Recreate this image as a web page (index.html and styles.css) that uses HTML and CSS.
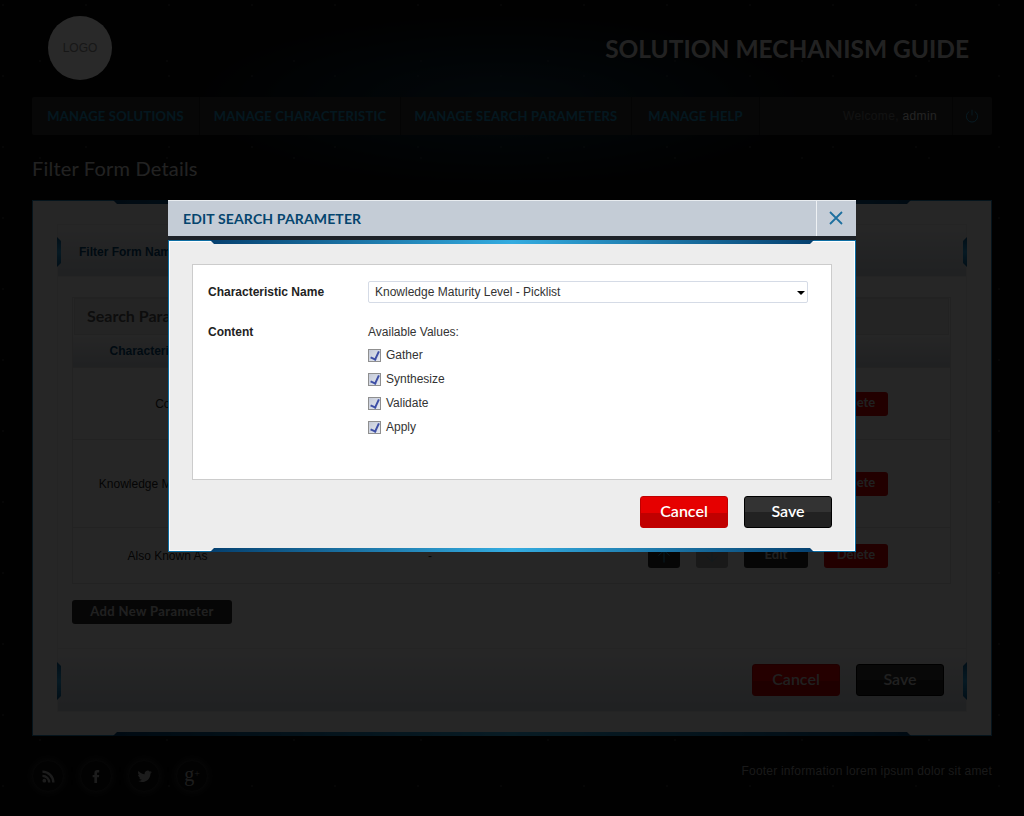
FILE: index.html
```html
<!DOCTYPE html>
<html lang="en">
<head>
    <meta charset="UTF-8">
    <meta name="viewport" content="width=device-width, initial-scale=1.0">
    <title>Filter Form Details</title>
    <link rel="stylesheet" href="styles.css">
</head>
<body>
    <div class="page">
        <header class="top">
            <div class="logo">LOGO</div>
            <div class="site-name">SOLUTION MECHANISM GUIDE</div>
        </header>

        <nav class="nav">
            <a class="nav-link link-1">MANAGE SOLUTIONS</a>
            <a class="nav-link link-2">MANAGE CHARACTERISTIC</a>
            <a class="nav-link link-3">MANAGE SEARCH PARAMETERS</a>
            <a class="nav-link link-4">MANAGE HELP</a>
            <div class="welcome">Welcome, <b>admin</b></div>
            <div class="power">
                <svg width="14" height="14" viewBox="0 0 14 14" fill="none" stroke="#2a9fd0" stroke-width="1">
                    <path d="M4.2 2.6a5.6 5.6 0 1 0 5.600 0"/>
                    <path d="M7 .8v5.600"/>
                </svg>
            </div>
        </nav>

        <h1 class="page-title">Filter Form Details</h1>

        <section class="panel">
            <div class="bar bar-top"></div>
            <div class="bar bar-bottom"></div>
            <div class="inner">
                <div class="form-head">
                    <div class="tab tab-left"></div>
                    <div class="tab tab-right"></div>
                    <span class="form-name">Filter Form Name</span>
                </div>

                <div class="params">
                    <div class="params-title">Search Parameters</div>
                    <div class="params-cols">
                        <div class="col-name">Characteristic Name</div>
                        <div class="col-value">Content</div>
                        <div class="col-actions">Actions</div>
                    </div>
                    <div class="row row-1">
                        <div class="col-name">Cost</div>
                        <div class="col-value">-</div>
                        <div class="col-actions">
                            <button class="mini up"><svg width="14" height="14" viewBox="0 0 14 14" fill="none" stroke="#2a9fd0" stroke-width="1"><path d="M7 13.500V1.500M1.500 6.500 7 1.500l5.500 5"/></svg></button>
                            <button class="mini down"><svg width="14" height="14" viewBox="0 0 14 14" fill="none" stroke="#2a9fd0" stroke-width="1"><path d="M7 .5v12M1.500 7.500 7 12.500l5.500-5"/></svg></button>
                            <button class="act edit">Edit</button>
                            <button class="act delete">Delete</button>
                        </div>
                    </div>
                    <div class="row row-2">
                        <div class="col-name">Knowledge Maturity Level</div>
                        <div class="col-value">-</div>
                        <div class="col-actions">
                            <button class="mini up"><svg width="14" height="14" viewBox="0 0 14 14" fill="none" stroke="#2a9fd0" stroke-width="1"><path d="M7 13.500V1.500M1.500 6.500 7 1.500l5.500 5"/></svg></button>
                            <button class="mini down"><svg width="14" height="14" viewBox="0 0 14 14" fill="none" stroke="#2a9fd0" stroke-width="1"><path d="M7 .5v12M1.500 7.500 7 12.500l5.500-5"/></svg></button>
                            <button class="act edit">Edit</button>
                            <button class="act delete">Delete</button>
                        </div>
                    </div>
                    <div class="row row-3">
                        <div class="col-name">Also Known As</div>
                        <div class="col-value">-</div>
                        <div class="col-actions">
                            <button class="mini up"><svg width="14" height="14" viewBox="0 0 14 14" fill="none" stroke="#2a9fd0" stroke-width="1"><path d="M7 13.500V1.500M1.500 6.500 7 1.500l5.500 5"/></svg></button>
                            <button class="mini down"><svg width="14" height="14" viewBox="0 0 14 14" fill="none" stroke="#2a9fd0" stroke-width="1"><path d="M7 .5v12M1.500 7.500 7 12.500l5.500-5"/></svg></button>
                            <button class="act edit">Edit</button>
                            <button class="act delete">Delete</button>
                        </div>
                    </div>
                </div>

                <button class="add-btn">Add New Parameter</button>

                <div class="form-foot">
                    <div class="tab tab-left"></div>
                    <div class="tab tab-right"></div>
                    <button class="btn btn-red">Cancel</button>
                    <button class="btn btn-dark">Save</button>
                </div>
            </div>
        </section>

        <footer class="footer">
            <div class="social">
                <span class="circle">
                    <svg width="13" height="13" viewBox="0 0 14 14" fill="#b0b0b0"><circle cx="2.500" cy="11.500" r="2"/><path d="M.5 5v2.500A6 6 0 0 1 6.500 13.500H9A8.500 8.500 0 0 0 .5 5z"/><path d="M.5 .5V3A10.500 10.500 0 0 1 11 13.500h2.500A13 13 0 0 0 .5 .5z"/></svg>
                </span>
                <span class="circle">
                    <svg width="8" height="13" viewBox="0 0 10 16" fill="#b0b0b0"><path d="M3 16V9H.8V6H3V4c0-2.600 1.400-4 3.700-4H9v3H7.500C6.500 3 6.300 3.400 6.300 4.300V6H9l-.4 3H6.300v7z"/></svg>
                </span>
                <span class="circle">
                    <svg width="15" height="12" viewBox="0 0 18 14" fill="#b0b0b0"><path d="M18 2.200l-2 .6 1.500-1.900-2.100.9A3.500 3.500 0 0 0 9.300 4.900C6.300 4.800 3.600 3.300 1.800 1c-1 1.700-.4 3.700 1 4.800l-1.500-.4c0 1.700 1.200 3.100 2.800 3.500l-1.500.1c.5 1.400 1.700 2.400 3.300 2.400A7 7 0 0 1 .5 12.800c6.500 3.300 15.200.5 15.700-8.900z"/></svg>
                </span>
                <span class="circle circle-g">g<sup>+</sup></span>
            </div>
            <div class="foot-text">Footer information lorem ipsum dolor sit amet</div>
        </footer>
    </div>

    <div class="overlay"></div>

    <div class="modal">
        <div class="modal-head">
            <h2 class="modal-title">EDIT SEARCH PARAMETER</h2>
            <button class="modal-close">
                <svg width="14" height="14" viewBox="0 0 14 14" fill="none" stroke="#1d6f9f" stroke-width="1.800"><path d="M1 1l12 12M13 1L1 13"/></svg>
            </button>
        </div>
        <div class="modal-body">
            <div class="bar bar-top"></div>
            <div class="bar bar-bottom"></div>
            <div class="modal-box">
                <div class="field field-name">
                    <label class="field-label">Characteristic Name</label>
                    <div class="select-wrap">
                        <select class="field-select">
                            <option>Knowledge Maturity Level - Picklist</option>
                        </select>
                    </div>
                </div>
                <div class="field">
                    <label class="field-label">Content</label>
                    <div class="values">
                        <div class="values-title">Available Values:</div>
                        <label class="check"><input type="checkbox" checked>Gather</label>
                        <label class="check"><input type="checkbox" checked>Synthesize</label>
                        <label class="check"><input type="checkbox" checked>Validate</label>
                        <label class="check"><input type="checkbox" checked>Apply</label>
                    </div>
                </div>
            </div>
            <div class="modal-actions">
                <button class="btn btn-red">Cancel</button>
                <button class="btn btn-dark">Save</button>
            </div>
        </div>
    </div>
</body>
</html>
```

FILE: styles.css
```css
* {
    box-sizing: border-box;
}
html, body {
    height: 816px;
    overflow: hidden;
}
body {
    margin: 0;
    font-family: "Liberation Sans", Arial, sans-serif;
    font-size: 12px;
    color: #333;
    background-color: #080808;
    background-image:
        radial-gradient(ellipse 320px 90px at 500px 100px, #0f2f42, rgba(15, 47, 66, 0) 100%),
        radial-gradient(circle at 3px 5px, #2a2a2a .7px, transparent 1px),
        radial-gradient(circle at 40px 61px, #262626 .7px, transparent 1px);
    background-size: auto, 83px 71px, 127px 97px;
    background-repeat: no-repeat, repeat, repeat;
}
button {
    font-family: inherit;
    border: none;
    padding: 0;
}

/* header */
.page {
    width: 1024px;
    height: 816px;
    padding: 0 32px;
}
.top {
    height: 97px;
    display: flex;
    justify-content: space-between;
    align-items: flex-start;
    padding: 16px 23px 0 16px;
}
.logo {
    width: 64px;
    height: 64px;
    border-radius: 50%;
    background: #fbfbfb;
    color: #909090;
    font-size: 12px;
    line-height: 65px;
    text-align: center;
}
.site-name {
    margin-top: 18px;
    font-family: Lato, sans-serif;
    font-weight: 700;
    font-size: 24.5px;
    line-height: 30px;
    color: #d4d4d4;
}

/* nav */
.nav {
    height: 38px;
    display: flex;
    align-items: stretch;
    background: #2f2f2f;
    border-radius: 2px;
}
.nav-link {
    display: flex;
    align-items: center;
    justify-content: center;
    padding-bottom: 1px;
    font-family: Lato, sans-serif;
    font-weight: 700;
    font-size: 13px;
    letter-spacing: .2px;
    color: #1a90c0;
    border-right: 1px solid #1c1c1c;
}
.link-1 { width: 168px; }
.link-2 { width: 201px; }
.link-3 { width: 231px; }
.link-4 { width: 128px; }
.welcome {
    flex: 1;
    text-align: right;
    line-height: 38px;
    padding-right: 15px;
    color: #707070;
    letter-spacing: .35px;
}
.welcome b {
    font-weight: normal;
    color: #d8d8d8;
}
.power {
    width: 40px;
    padding-right: 2px;
    display: flex;
    align-items: center;
    justify-content: center;
    border-left: 1px solid #1c1c1c;
}

.page-title {
    margin: 0;
    height: 65px;
    padding-top: 20px;
    font-family: Lato, sans-serif;
    font-weight: 400;
    font-size: 20px;
    letter-spacing: .2px;
    line-height: 26px;
    color: #d4d4d4;
}

/* panel behind the dialog */
.panel {
    position: relative;
    width: 960px;
    height: 536px;
    padding: 23px 24px;
    background: #ededed;
    border: 1px solid #1f7fb0;
}
.bar {
    position: absolute;
    left: 41px;
    right: 41px;
    height: 4px;
    background: linear-gradient(90deg, #05406f, #34ace0 50%, #05406f);
}
.panel .bar {
    left: 80px;
    right: 80px;
}
.panel .bar-top {
    top: -1px;
    clip-path: polygon(0 0, 100% 0, calc(100% - 4px) 100%, 4px 100%);
}
.panel .bar-bottom {
    bottom: -1px;
    clip-path: polygon(4px 0, calc(100% - 4px) 0, 100% 100%, 0 100%);
}
.inner {
    height: 488px;
    border: 1px solid #ddd;
    display: flex;
    flex-direction: column;
}
.form-head {
    position: relative;
    height: 52px;
    flex-shrink: 0;
    padding: 1px 0 0 21px;
    line-height: 52px;
    background: linear-gradient(#ededed, #c4cad2);
    border-bottom: 1px solid #ddd;
}
.form-name {
    font-weight: bold;
    color: #05456e;
}
.tab {
    position: absolute;
    top: 12px;
    width: 4px;
    height: 30px;
    background: linear-gradient(#0a5a8e, #2a9fd8 50%, #0a5a8e);
}
.tab-left {
    left: -1px;
    clip-path: polygon(0 0, 100% 4px, 100% calc(100% - 4px), 0 100%);
}
.tab-right {
    right: -1px;
    clip-path: polygon(100% 0, 0 4px, 0 calc(100% - 4px), 100% 100%);
}
.params {
    margin: 20px 15px 0 14px;
    border: 1px solid #d4d4d4;
}
.params-title {
    height: 37px;
    margin: 0 1px 1px;
    padding-left: 12px;
    font-family: Lato, sans-serif;
    font-size: 16px;
    font-weight: 700;
    line-height: 33px;
    color: #555;
    background: #dedede;
    border: 1px solid #d4d4d4;
}
.params-cols, .row {
    display: flex;
    align-items: center;
    text-align: center;
}
.params-cols {
    height: 32px;
    padding-bottom: 1px;
    font-weight: bold;
    color: #05456e;
    background: linear-gradient(#e9e9e9, #c4cad2);
    border-bottom: 1px solid #d4d4d4;
}
.row {
    border-bottom: 1px solid #d4d4d4;
    color: #222;
}
.row:last-child {
    border-bottom: none;
}
.row-1 { height: 72px; }
.row-2 { height: 88px; }
.row-3 { height: 55px; }
.col-name { width: 189px; }
.col-value { width: 336px; }
.col-actions {
    flex: 1;
    display: flex;
    gap: 16px;
    padding-left: 50px;
}
.params-cols .col-actions {
    display: block;
    padding: 0;
}
.mini, .act {
    height: 24px;
    border-radius: 3px;
    display: flex;
    align-items: center;
    justify-content: center;
    font-family: Lato, sans-serif;
    font-size: 13px;
    font-weight: 700;
    color: #c8c8c8;
}
.act {
    padding-bottom: 3px;
}
.mini {
    width: 32px;
}
.up {
    background: #2a2a2a;
}
.down {
    background: #9a9a9a;
}
.down svg {
    opacity: .4;
}
.edit {
    width: 64px;
    background: #2a2a2a;
}
.delete {
    width: 64px;
    background: #d00000;
}
.add-btn {
    width: 160px;
    height: 24px;
    margin: 16px 0 0 14px;
    padding-bottom: 2px;
    border-radius: 3px;
    background: #2a2a2a;
    color: #c8c8c8;
    font-family: Lato, sans-serif;
    font-size: 13px;
    font-weight: 700;
    letter-spacing: .4px;
}
.form-foot {
    position: relative;
    height: 63px;
    margin-top: auto;
    display: flex;
    justify-content: flex-end;
    gap: 16px;
    padding: 15px 22px 0 0;
    background: linear-gradient(#ededed, #c4cad2);
    border-top: 1px solid #ddd;
}
.form-foot .tab {
    top: 13px;
    height: 38px;
}
.form-foot .btn {
    color: #c8c8c8;
}

.btn {
    width: 88px;
    height: 32px;
    padding-bottom: 4px;
    border-radius: 3px;
    font-family: Lato, sans-serif;
    font-size: 16px;
    font-weight: 600;
    color: #fff;
}
.btn-red {
    background: linear-gradient(#e60000 55%, #c00000 55%);
    border: 1px solid #c00000;
}
.btn-dark {
    background: linear-gradient(#333 50%, #222 50%);
    border: 1px solid #000;
}

/* footer */
.footer {
    display: flex;
    justify-content: space-between;
    align-items: flex-start;
    padding-top: 24px;
}
.social {
    display: flex;
    gap: 16px;
}
.circle {
    width: 32px;
    height: 32px;
    border-radius: 50%;
    display: flex;
    align-items: center;
    justify-content: center;
    background: #0e0e0e;
    border: 1px solid #262626;
    box-shadow: 0 0 6px 2px #242424;
}
.circle-g {
    font-family: "Liberation Serif", serif;
    font-size: 20px;
    line-height: 28px;
    color: #b0b0b0;
    padding-bottom: 4px;
}
.circle-g sup {
    font-size: 10px;
    line-height: 0;
}
.foot-text {
    margin-top: 4px;
    color: #999;
    letter-spacing: .2px;
}

/* dialog */
.overlay {
    position: fixed;
    inset: 0;
    background: rgba(0, 0, 0, .84);
}
.modal {
    position: fixed;
    left: 168px;
    top: 200px;
    width: 688px;
}
.modal-head {
    height: 40px;
    display: flex;
    justify-content: space-between;
    background: #c4ccd6;
    border-top: 1px solid #e8ecf0;
    border-bottom: 4px solid #1d2228;
}
.modal-title {
    margin: 0;
    padding-left: 15px;
    font-family: Lato, sans-serif;
    font-weight: 700;
    font-size: 14px;
    letter-spacing: .15px;
    line-height: 35px;
    color: #05456e;
}
.modal-close {
    width: 40px;
    height: 35px;
    padding: 0 2px 2px 0;
    display: flex;
    align-items: center;
    justify-content: center;
    background: transparent;
    border-left: 1px solid #eef1f4;
}
.modal-body {
    position: relative;
    height: 312px;
    padding: 23px 23px 0;
    background: #ededed;
    border: 1px solid #0d6ea3;
    box-shadow: inset 0 0 0 1px #fff;
}
.modal-body .bar-top {
    top: -1px;
    clip-path: polygon(0 0, 100% 0, calc(100% - 4px) 100%, 4px 100%);
}
.modal-body .bar-bottom {
    bottom: -1px;
    clip-path: polygon(4px 0, calc(100% - 4px) 0, 100% 100%, 0 100%);
}
.modal-box {
    height: 216px;
    padding: 16px 23px 0 15px;
    background: #fff;
    border: 1px solid #ccc;
}
.field {
    display: flex;
}
.field-name {
    height: 40px;
}
.field-label {
    width: 160px;
    flex-shrink: 0;
    font-weight: bold;
    line-height: 22px;
    color: #222;
}
.select-wrap {
    position: relative;
    flex: 1;
    height: 22px;
}
.select-wrap::after {
    content: "";
    position: absolute;
    right: 3px;
    top: 10px;
    border-left: 4px solid transparent;
    border-right: 4px solid transparent;
    border-top: 4px solid #000;
}
.field-select {
    width: 100%;
    height: 22px;
    padding: 0 0 0 6px;
    appearance: none;
    font-family: inherit;
    font-size: 12px;
    color: #333;
    background: #fff;
    border: 1px solid #d5dbe6;
    border-radius: 2px;
}
.values-title {
    line-height: 22px;
    color: #333;
}
.check {
    display: flex;
    align-items: center;
    height: 24px;
    color: #333;
}
.check input {
    appearance: none;
    position: relative;
    width: 13px;
    height: 13px;
    margin: 0 5px 0 0;
    background: linear-gradient(135deg, #c4cad8, #e6e9f0);
    border: 1px solid #8f8f8f;
}
.check input::after {
    content: "";
    position: absolute;
    left: 3px;
    top: 0;
    width: 4px;
    height: 8px;
    border-right: 2px solid #3d4ea5;
    border-bottom: 2px solid #3d4ea5;
    transform: rotate(25deg);
}
.modal-actions {
    display: flex;
    justify-content: flex-end;
    gap: 16px;
    margin-top: 16px;
}
```
